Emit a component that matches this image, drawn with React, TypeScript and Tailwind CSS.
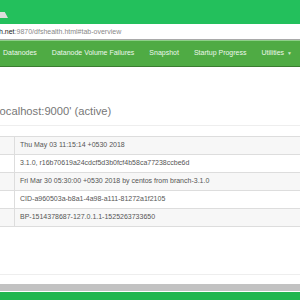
import React from "react";

const rows = [
  "Thu May 03 11:15:14 +0530 2018",
  "3.1.0, r16b70619a24cdcf5d3b0fcf4b58ca77238ccbe6d",
  "Fri Mar 30 05:30:00 +0530 2018 by centos from branch-3.1.0",
  "CID-a960503a-b8a1-4a98-a111-81272a1f2105",
  "BP-1514378687-127.0.1.1-1525263733650",
];

export default function App() {
  return (
    <div className="w-[300px] h-[300px] overflow-hidden bg-white flex flex-col" style={{ fontFamily: '"Liberation Sans", Arial, sans-serif' }}>
      <div className="h-[24px] bg-[#23c05c] relative shrink-0">
        <div className="absolute left-0 top-[12px] w-[8px] h-[6px] bg-[#dcdcdc] [clip-path:polygon(0_0,60%_0,100%_100%,0_100%)]" />
      </div>
      <div className="h-[16px] bg-white border-b border-[#a9a9a9] flex items-center shrink-0 overflow-hidden">
        <span className="text-[7px] leading-none whitespace-nowrap -ml-[1px]">
          <span className="text-[#222]">h.net</span>
          <span className="text-[#888]">:9870/dfshealth.html#tab-overview</span>
        </span>
      </div>
      <div className="h-[27px] bg-[#4fab44] border-t border-[#8fd08a] border-b border-b-[#3a7d30] flex items-center shrink-0 text-[#eef7ec] text-[7px] whitespace-nowrap">
        <span className="ml-[3px]">Datanodes</span>
        <span className="ml-[15px]">Datanode Volume Failures</span>
        <span className="ml-[15px]">Snapshot</span>
        <span className="ml-[15px]">Startup Progress</span>
        <span className="ml-[15px] flex items-center gap-[3px]">Utilities <span className="text-[5px] text-[#cfe8cb]">▼</span></span>
      </div>
      <div className="h-[59px] shrink-0 border-b border-[#eeeeee] flex items-end pb-[8px] overflow-hidden">
        <span className="text-[11.2px] leading-none text-[#777] whitespace-nowrap -ml-[5px]">'localhost:9000' (active)</span>
      </div>
      <div className="h-[10px] shrink-0" />
      <div className="border-t border-[#dddddd] shrink-0">
        {rows.map((r, i) => (
          <div key={i} className={`h-[18px] flex border-b border-[#dddddd] ${i % 2 === 0 ? "bg-[#f7f7f7]" : "bg-white"}`}>
            <div className="w-[15px] border-r border-[#dddddd] shrink-0" />
            <div className="pl-[5px] flex items-center text-[7px] text-[#555] whitespace-nowrap">{r}</div>
          </div>
        ))}
      </div>
      <div className="h-[48px] shrink-0 border-b border-[#eeeeee]" />
      <div className="h-[9px] shrink-0" />
      <div className="h-[7px] bg-[#c2c2c2] shrink-0" />
      <div className="h-[1px] bg-white shrink-0" />
      <div className="flex-1 bg-[#21b64f]" />
    </div>
  );
}
